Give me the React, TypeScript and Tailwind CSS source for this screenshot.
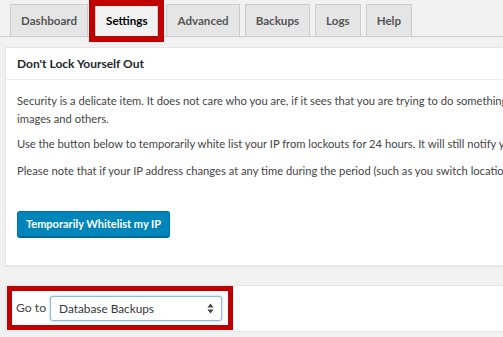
const tabs = ['Dashboard', 'Settings', 'Advanced', 'Backups', 'Logs', 'Help'];

function UpDownArrows() {
  return (
    <svg width="7" height="11" viewBox="0 0 7 11" className="text-[#444]">
      <path d="M3.5 0.5 L6.5 4.5 L0.5 4.5 Z" fill="currentColor" />
      <path d="M3.5 10.5 L6.5 6.5 L0.5 6.5 Z" fill="currentColor" />
    </svg>
  );
}

export default function App() {
  return (
    <div className="w-[503px] h-[337px] overflow-hidden bg-[#f1f1f1] text-[#444] font-['Lato',sans-serif]">
      {/* Tabs */}
      <div className="flex items-end h-[37px] pl-[10px] border-b border-[#ccc] w-[700px]">
        {tabs.map((tab) => {
          const active = tab === 'Settings';
          return (
            <div
              key={tab}
              className={`relative -mb-px h-[33px] flex items-center px-[10px] border border-[#ccc] text-[11.6px] font-bold ${
                active
                  ? 'bg-[#f1f1f1] border-b-[#f1f1f1] text-[#000] ml-[2px] mr-[8px]'
                  : 'bg-[#e5e5e5] text-[#555] mr-[5px]'
              }`}
            >
              {tab}
              {active && (
                <div className="absolute -left-[7px] -right-[7px] -top-[5px] -bottom-[6px] border-[6px] border-[#c00000]" />
              )}
            </div>
          );
        })}
      </div>

      {/* Card */}
      <div className="ml-[5px] mt-[10px] w-[760px] bg-white border border-[#e5e5e5] shadow-[0_1px_1px_rgba(0,0,0,0.04)]">
        <div className="h-[32px] flex items-center px-[11px] border-b border-[#eee] text-[12px] font-bold text-[#23282d]">
          Don't Lock Yourself Out
        </div>
        <div className="px-[11px] pt-[12px] pb-[28px] text-[11.2px] leading-[18px]">
          <p className="whitespace-nowrap">
            Security is a delicate item. It does not care who you are, if it sees that you are trying to do something suspicious it will lock you out, even
            <br />
            images and others.
          </p>
          <p className="whitespace-nowrap mt-[7px]">
            Use the button below to temporarily white list your IP from lockouts for 24 hours. It will still notify you of any lockouts.
          </p>
          <p className="whitespace-nowrap mt-[9px]">
            Please note that if your IP address changes at any time during the period (such as you switch locations) you will need to do this again.
          </p>
          <button className="mt-[31px] h-[26px] px-[8px] rounded-[3px] bg-[#0085ba] border border-[#0073aa] border-b-[#006799] shadow-[0_1px_0_#006799] text-white text-[11px] font-bold">
            Temporarily Whitelist my IP
          </button>
        </div>
      </div>

      {/* Go to */}
      <div className="ml-[5px] mt-[19px] w-[760px] h-[47px] bg-white border border-[#e5e5e5] flex items-center">
        <div className="relative flex items-center gap-[4px] pl-[10px]">
          <span className="text-[12.2px] text-[#444]">Go to</span>
          <div className="w-[172px] h-[25px] flex items-center justify-between pl-[8px] pr-[7px] border border-[#8cbbe6] rounded-[3px] shadow-[0_0_2px_rgba(30,140,190,0.6)] bg-white text-[11.8px] text-[#32373c]">
            Database Backups
            <UpDownArrows />
          </div>
          <div className="absolute left-[1px] -right-[11px] -top-[10px] -bottom-[9px] border-[5px] border-[#c00000]" />
        </div>
      </div>
    </div>
  );
}
